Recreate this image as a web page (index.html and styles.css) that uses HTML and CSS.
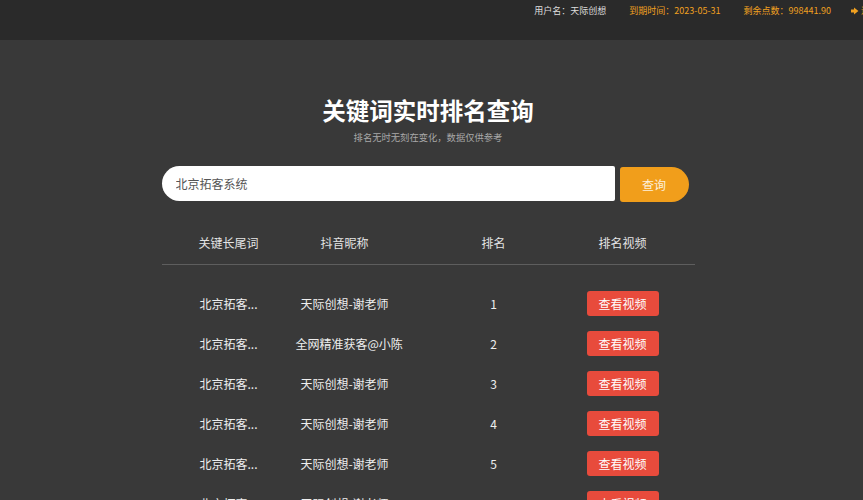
FILE: index.html
```html
<!DOCTYPE html>
<html lang="zh-CN">

<head>
    <meta charset="UTF-8">
    <title>关键词实时排名查询</title>

    <link rel="stylesheet" href="styles.css">
</head>

<body>

    <header class="topbar">
        <div class="topbar-info">
            <span class="user">用户名：天际创想</span>
            <span class="gold">到期时间：2023-05-31</span>
            <span class="gold">剩余点数：998441.90</span>
            <a class="logout" href="#">
                <svg width="8" height="8" viewBox="0 0 8 8">
                    <path d="M0 2.6h3V0.6L7.4 4 3 7.4V5.4H0z" fill="#f0a020"></path>
                </svg>
                退出
            </a>
        </div>
    </header>

    <section class="main">
        <h1 class="title">关键词实时排名查询</h1>
        <p class="subtitle">排名无时无刻在变化，数据仅供参考</p>

        <form class="search">
            <input class="search-input" type="text" value="北京拓客系统">
            <button class="search-btn" type="button">查询</button>
        </form>

        <div class="table">
            <div class="row head">
                <div>关键长尾词</div>
                <div>抖音昵称</div>
                <div class="rank">排名</div>
                <div>排名视频</div>
            </div>

            <div class="rows">
                <div class="row">
                    <div>北京拓客...</div>
                    <div>天际创想-谢老师</div>
                    <div class="rank">1</div>
                    <div><a class="video-btn" href="#">查看视频</a></div>
                </div>
                <div class="row">
                    <div>北京拓客...</div>
                    <div>全网精准获客@小陈</div>
                    <div class="rank">2</div>
                    <div><a class="video-btn" href="#">查看视频</a></div>
                </div>
                <div class="row">
                    <div>北京拓客...</div>
                    <div>天际创想-谢老师</div>
                    <div class="rank">3</div>
                    <div><a class="video-btn" href="#">查看视频</a></div>
                </div>
                <div class="row">
                    <div>北京拓客...</div>
                    <div>天际创想-谢老师</div>
                    <div class="rank">4</div>
                    <div><a class="video-btn" href="#">查看视频</a></div>
                </div>
                <div class="row">
                    <div>北京拓客...</div>
                    <div>天际创想-谢老师</div>
                    <div class="rank">5</div>
                    <div><a class="video-btn" href="#">查看视频</a></div>
                </div>
                <div class="row">
                    <div>北京拓客...</div>
                    <div>天际创想-谢老师</div>
                    <div class="rank">6</div>
                    <div><a class="video-btn" href="#">查看视频</a></div>
                </div>
            </div>
        </div>
    </section>

</body>

</html>
```

FILE: styles.css
```css
body {
    margin: 0;
    background-color: #393939;
    font-family: "Noto Sans CJK SC", "Noto Sans", sans-serif;
    color: #eeeeee;
    overflow: hidden;
}

.topbar {
    height: 40px;
    background-color: #2a2a2a;
}

.topbar-info {
    display: flex;
    justify-content: flex-end;
    gap: 23px;
    margin-right: -16px;
    padding-top: 4px;
    font-size: 9px;
    line-height: 14px;
}

.user {
    color: #dddddd;
}

.gold {
    color: #f0a020;
}

.logout {
    display: flex;
    align-items: center;
    gap: 2px;
    margin-left: -3px;
    color: #f0a020;
    text-decoration: none;
}

.main {
    width: 533px;
    margin-left: calc(50% - 270px);
    padding-top: 55px;
}

.title {
    margin: 0;
    text-align: center;
    font-size: 23.5px;
    line-height: 30px;
    font-weight: 700;
    color: #ffffff;
}

.subtitle {
    margin: 5px 0 0;
    text-align: center;
    font-size: 9.3px;
    line-height: 14px;
    color: #a8a8a8;
}

.search {
    display: flex;
    gap: 5px;
    margin-top: 22px;
}

.search-input {
    width: 453px;
    height: 35px;
    box-sizing: border-box;
    border: none;
    border-radius: 18px 2px 2px 18px;
    padding: 0 14px;
    font-family: inherit;
    font-size: 12px;
    color: #555555;
    background: #ffffff;
    outline: none;
}

.search-btn {
    width: 69px;
    height: 35px;
    margin-top: 1px;
    border: none;
    border-radius: 3px 18px 18px 3px;
    background-color: #f19e1b;
    color: #fdf0dc;
    font-family: inherit;
    font-size: 12px;
}

.table {
    margin-top: 18px;
    font-size: 12px;
}

.row {
    display: grid;
    grid-template-columns: 134px 98px 160px 138px;
    align-items: center;
    height: 40px;
    text-align: center;
    white-space: nowrap;
}

.row.head {
    height: 44px;
    border-bottom: 1px solid #5e5e5e;
    color: #e4e4e4;
}

.rank {
    padding-left: 40px;
}

.rows {
    padding-top: 18px;
}

.video-btn {
    display: inline-block;
    width: 72px;
    height: 25px;
    line-height: 25px;
    border-radius: 3px;
    background-color: #e84b3c;
    color: #ffffff;
    text-decoration: none;
}
```
